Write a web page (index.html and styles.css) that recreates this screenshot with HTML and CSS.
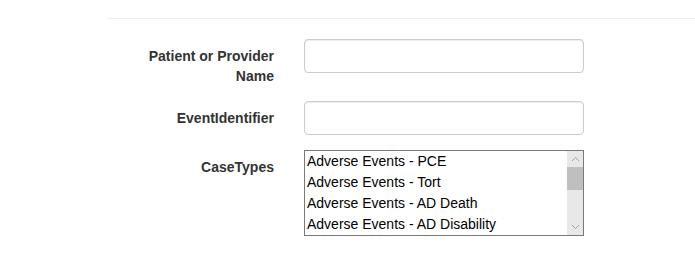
FILE: index.html
```html
<!DOCTYPE html>
<html lang="en">
<head>
    <meta charset="UTF-8">
    <meta name="viewport" content="width=device-width, initial-scale=1.0">
    <title>Search Cases</title>
    <link rel="stylesheet" href="styles.css">
</head>
<body>
    <div class="page">
        <hr class="divider">
        <form class="search-form">
            <div class="form-group">
                <label class="control-label" for="name">Patient or Provider Name</label>
                <input class="form-control" type="text" id="name">
            </div>
            <div class="form-group">
                <label class="control-label" for="event">EventIdentifier</label>
                <input class="form-control" type="text" id="event">
            </div>
            <div class="form-group">
                <label class="control-label">CaseTypes</label>
                <div class="listbox">
                    <div class="listbox-items">
                        <div class="listbox-item">Adverse Events - PCE</div>
                        <div class="listbox-item">Adverse Events - Tort</div>
                        <div class="listbox-item">Adverse Events - AD Death</div>
                        <div class="listbox-item">Adverse Events - AD Disability</div>
                    </div>
                    <div class="scrollbar">
                        <div class="scroll-btn">
                            <svg width="9" height="6" viewBox="0 0 9 6"><polyline points="1,5 4.5,1.5 8,5" fill="none" stroke="#a3a3a3" stroke-width="1"/></svg>
                        </div>
                        <div class="scroll-thumb"></div>
                        <div class="scroll-track"></div>
                        <div class="scroll-btn">
                            <svg width="9" height="6" viewBox="0 0 9 6"><polyline points="1,1 4.5,4.5 8,1" fill="none" stroke="#a3a3a3" stroke-width="1"/></svg>
                        </div>
                    </div>
                </div>
            </div>
        </form>
    </div>
</body>
</html>
```

FILE: styles.css
```css
body {
    margin: 0;
    background-color: #fff;
    font-family: "Liberation Sans", Arial, sans-serif;
    font-size: 14px;
    line-height: 20px;
    color: #333;
}
.page {
    padding-left: 108px;
    padding-top: 18px;
}
.divider {
    margin: 0 0 20px 0;
    border: 0;
    border-top: 1px solid #eee;
}
.search-form {
    display: flex;
    flex-direction: column;
    gap: 15px;
}
.form-group {
    display: flex;
    align-items: flex-start;
    gap: 30px;
}
.control-label {
    width: 166px;
    padding-top: 7px;
    text-align: right;
    font-weight: bold;
}
.form-control {
    box-sizing: border-box;
    width: 280px;
    height: 34px;
    margin: 0;
    padding: 6px 12px;
    border: 1px solid #ccc;
    border-radius: 4px;
    box-shadow: inset 0 1px 1px rgba(0, 0, 0, 0.075);
    font-family: inherit;
    font-size: 14px;
}
.listbox {
    display: flex;
    width: 278px;
    height: 84px;
    border: 1px solid #7a7a7a;
    color: #000;
}
.listbox-items {
    flex: 1;
}
.listbox-item {
    height: 21px;
    line-height: 21px;
    padding-left: 2px;
    white-space: nowrap;
}
.scrollbar {
    width: 16px;
    display: flex;
    flex-direction: column;
    background-color: #e8e8e8;
}
.scroll-btn {
    height: 16px;
    display: flex;
    align-items: center;
    justify-content: center;
}
.scroll-thumb {
    height: 23px;
    background-color: #bfbfbf;
}
.scroll-track {
    flex: 1;
}
```
